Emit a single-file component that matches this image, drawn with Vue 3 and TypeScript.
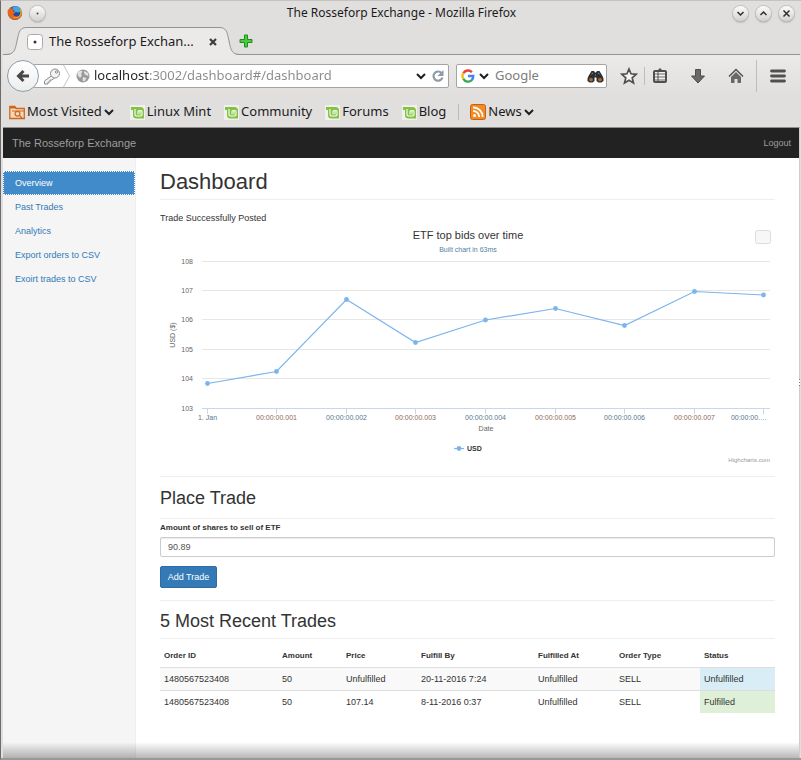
<script setup lang="ts">
import { ref } from 'vue'

interface Trade {
  id: string
  amount: number
  price: string
  fulfillBy: string
  fulfilledAt: string
  type: string
  status: string
}

const links: string[] = ['Overview', 'Past Trades', 'Analytics', 'Export orders to CSV', 'Exoirt trades to CSV']
const mintLinks: string[] = ['Linux Mint', 'Community', 'Forums', 'Blog']
const columns: string[] = ['Order ID', 'Amount', 'Price', 'Fulfill By', 'Fulfilled At', 'Order Type', 'Status']

const trades: Trade[] = [
  { id: '1480567523408', amount: 50, price: 'Unfulfilled', fulfillBy: '20-11-2016 7:24', fulfilledAt: 'Unfulfilled', type: 'SELL', status: 'Unfulfilled' },
  { id: '1480567523408', amount: 50, price: '107.14', fulfillBy: '8-11-2016 0:37', fulfilledAt: 'Unfulfilled', type: 'SELL', status: 'Fulfilled' },
]

const address = ref('localhost:3002/dashboard#/dashboard')
const query = ref('')
const shares = ref('90.89')

const gridValues: number[] = [108, 107, 106, 105, 104, 103]
const bids: number[] = [103.84, 104.24, 106.69, 105.22, 106.0, 106.38, 105.81, 106.96, 106.84]
const timeLabels: string[] = [
  '1. Jan', '00:00:00.001', '00:00:00.002', '00:00:00.003', '00:00:00.004',
  '00:00:00.005', '00:00:00.006', '00:00:00.007', '00:00:00.…',
]

const plotX = (i: number): number => Math.floor(47 + i * 69.6) + 0.5
const plotY = (v: number): number => Math.round((35 + (108 - v) * 29.4) * 2) / 2
const gridY = (v: number): number => Math.floor(35 + (108 - v) * 29.4) + 0.5
const labelX = (i: number): number => (i === 8 ? 589 : plotX(i))
const line: string = bids.map((v, i) => `${plotX(i)},${plotY(v)}`).join(' ')
</script>

<template>
  <div class="window">
    <header class="titlebar">
      <div class="title-left">
        <svg width="16" height="16" viewBox="0 0 16 16" aria-hidden="true">
          <circle cx="8" cy="8" r="7" fill="#1d4f9c" />
          <path d="M5 3C7 .8 11 .8 13 3c1.500 1.600 1 4-1 4.500L8 7z" fill="#4aa3dd" />
          <path d="M1 4c-.8 3-.5 6 1.200 8 2.600 3.200 8 3.600 10.800.8C15.500 10.500 15.700 7 14.500 4.500c.2 2-.2 3-.8 3.800C13 11 10.500 12 8.500 11.300 6.500 10.700 6 9.500 6.600 8.500l2-.8C7 7 6 6 6 4.500 4.500 4 4 3 3.800 2 2.500 2.600 2 4 2 5z" fill="#e8641b" />
          <path d="M14.500 4.500c.7 3-.3 6-2.500 7.500-2 1.500-5 1.500-6.500 0 3 1 5.700.3 7-1.500 1.200-1.700 1.300-4 .5-6z" fill="#f9c31f" />
        </svg>
        <button class="round" aria-label="Window menu">
          <svg width="15" height="15" viewBox="0 0 15 15"><circle cx="7.500" cy="7.500" r="1" fill="#444" /></svg>
        </button>
      </div>
      <div class="title-text">The Rosseforp Exchange - Mozilla Firefox</div>
      <div class="title-right">
        <button class="round" aria-label="Minimize">
          <svg width="15" height="15" viewBox="0 0 15 15"><path d="M4.500 6l3 3 3-3" class="glyph" /></svg>
        </button>
        <button class="round" aria-label="Maximize">
          <svg width="15" height="15" viewBox="0 0 15 15"><path d="M4.500 9l3-3 3 3" class="glyph" /></svg>
        </button>
        <button class="round" aria-label="Close">
          <svg width="15" height="15" viewBox="0 0 15 15"><path d="M4.500 4.500l6 6M10.500 4.500l-6 6" class="glyph" /></svg>
        </button>
      </div>
    </header>

    <div class="tabstrip">
      <svg class="tab-edge" width="22" height="28" viewBox="0 0 22 28" aria-hidden="true">
        <path d="M0 28C9 28 10 24 12 14S15 .5 22 .5V28z" fill="#ebeae9" />
        <path d="M0 27.500C9 27.500 10 24 12 14S15 .5 22 .5" fill="none" stroke="#949392" />
      </svg>
      <div class="tab">
        <svg width="16" height="16" viewBox="0 0 16 16" aria-hidden="true">
          <rect x=".5" y=".5" width="15" height="15" rx="3" fill="#fff" stroke="#aaa" />
          <circle cx="8" cy="8" r="1.500" fill="#333" />
        </svg>
        <span class="tab-title">The Rosseforp Exchan...</span>
        <button class="plain" aria-label="Close tab">
          <svg width="10" height="10" viewBox="0 0 10 10"><path d="M2 2l6 6M8 2l-6 6" stroke="#3c3c3c" stroke-width="2.200" /></svg>
        </button>
      </div>
      <svg class="tab-edge" width="22" height="28" viewBox="0 0 22 28" aria-hidden="true">
        <path d="M22 28C13 28 12 24 10 14S7 .5 0 .5V28z" fill="#ebeae9" />
        <path d="M22 27.500C13 27.500 12 24 10 14S7 .5 0 .5" fill="none" stroke="#949392" />
      </svg>
      <button class="plain new-tab" aria-label="New tab">
        <svg width="14" height="14" viewBox="0 0 14 14">
          <path d="M5.500 1h3v4.500H13v3H8.500V13h-3V8.500H1v-3h4.500z" fill="#4ccb3c" stroke="#1c8f1c" stroke-linejoin="round" />
        </svg>
      </button>
    </div>

    <nav class="toolbar" aria-label="Browser toolbar">
      <button class="back" aria-label="Back">
        <svg width="16" height="16" viewBox="0 0 16 16"><path d="M8.500 3L3.500 8l5 5M4 8H14" fill="none" stroke="#474747" stroke-width="3" /></svg>
      </button>
      <div class="field url">
        <svg width="32" height="22" viewBox="0 0 32 22" aria-hidden="true">
          <path d="M21.500 0l6 11-6 11" fill="none" stroke="#c4c4c4" />
          <g fill="#f4f4f4" stroke="#8b8b8b">
            <path d="M10 10.500L2.500 16v3H6v-2h2v-2h2l2.500-2z" />
            <circle cx="13" cy="8.500" r="4.500" /><circle cx="14.500" cy="7" r="1.200" />
          </g>
        </svg>
        <svg class="globe" width="14" height="14" viewBox="0 0 14 14" aria-hidden="true">
          <circle cx="7" cy="7" r="6.500" fill="#999" />
          <path d="M2 3l3-1.500 1.500 1L5 5l1 1.500L4 9 1.500 6zM8 2l4 2 .5 3-3-1L8 4zM7 8l3.500 1-2 3.500-2-1z" fill="#e3e3e3" />
        </svg>
        <input v-model="address" class="address" aria-label="Address" type="text" />
        <button class="plain" aria-label="Show history">
          <svg width="10" height="8" viewBox="0 0 10 8"><path d="M1 2l4 4 4-4" class="chev" /></svg>
        </button>
        <button class="plain reload" aria-label="Reload">
          <svg width="14" height="14" viewBox="0 0 14 14">
            <path d="M10.500 4A4.600 4.600 0 1 0 11.500 8.500" fill="none" stroke="#8e9aa5" stroke-width="2.200" />
            <path d="M12.500 1v6h-6z" fill="#8e9aa5" />
          </svg>
        </button>
      </div>
      <div class="field search">
        <svg width="14" height="14" viewBox="0 0 14 14" fill="none" stroke-width="2.400" aria-hidden="true">
          <path d="M2.300 4.300A5.300 5.300 0 0 1 10.900 3.200" stroke="#ea4335" />
          <path d="M2.300 9.700A5.300 5.300 0 0 1 2.300 4.300" stroke="#fbbc05" />
          <path d="M10.900 11A5.300 5.300 0 0 1 2.300 9.700" stroke="#34a853" />
          <path d="M7 7H12.300A5.300 5.300 0 0 1 10.600 11.100" stroke="#4285f4" />
        </svg>
        <svg width="10" height="8" viewBox="0 0 10 8" aria-hidden="true"><path d="M1 2l4 4 4-4" class="chev" /></svg>
        <input v-model="query" class="query" aria-label="Search" placeholder="Google" type="text" />
        <button class="plain" aria-label="Find">
          <svg width="17" height="13" viewBox="0 0 17 13">
            <path d="M4.500 1h2.500l1 1.500h1l1-1.500h2.500L15.500 6l1 2.500v2.500l-2 1.500h-3L9.500 11V7.500h-2V11l-2 1.500h-3L.5 11V8.500L1.500 6z" fill="#2b2f31" />
            <circle cx="4" cy="9.600" r="1.900" fill="#b0662a" /><circle cx="13" cy="9.600" r="1.900" fill="#b0662a" />
            <path d="M4.500 4l1.500-1M11 3l1.500 1M8 5h1" stroke="#8b9296" />
          </svg>
        </button>
      </div>
      <div class="tools">
        <button class="plain" aria-label="Bookmark this page">
          <svg width="18" height="18" viewBox="0 0 18 18"><path d="M9 2l2 4.800 5.200.5-4 3.500 1.300 5.200L9 13.200 4.500 16l1.300-5.200-4-3.500L7 6.800z" fill="#f5f5f5" stroke="#505050" stroke-width="1.700" /></svg>
        </button>
        <i class="bar short" />
        <button class="plain" aria-label="Bookmarks list">
          <svg width="16" height="18" viewBox="0 0 16 18">
            <rect x="2" y="4" width="12" height="11" rx="1" fill="#f2f2f2" stroke="#505050" stroke-width="2" />
            <path d="M5 4l3-3 3 3z" fill="#505050" />
            <path d="M3 7h10M3 10h10M3 13h10" stroke="#6a6a6a" />
            <path d="M6 5v10" stroke="#505050" />
          </svg>
        </button>
        <button class="plain wide" aria-label="Downloads">
          <svg width="16" height="16" viewBox="0 0 16 16"><path d="M5.500 1.500h5V8H14.500L8 15 1.500 8h4z" fill="#686868" stroke="#4e4e4e" /></svg>
        </button>
        <button class="plain wide" aria-label="Home">
          <svg width="16" height="16" viewBox="0 0 16 16">
            <path d="M3 9l5-5 5 5v6H9.500v-4h-3v4H3z" fill="#696969" />
            <path d="M1 8.500l7-7 7 7" fill="none" stroke="#505050" stroke-width="1.500" />
          </svg>
        </button>
        <i class="bar" />
        <button class="plain menu" aria-label="Menu">
          <svg width="16" height="14" viewBox="0 0 16 14"><path d="M1.500 2h13M1.500 7h13M1.500 12h13" stroke="#505050" stroke-width="2.800" stroke-linecap="round" /></svg>
        </button>
      </div>
    </nav>

    <nav class="bookmarks" aria-label="Bookmarks">
      <button class="plain mark visited">
        <svg width="16" height="16" viewBox="0 0 16 16" aria-hidden="true">
          <path d="M.8 14.500v-12h5l1.500 2h8v10z" fill="#f3d9bf" stroke="#d0661b" stroke-width="1.300" />
          <path d="M.8 2.500h5l1.500 2h-6z" fill="#d0661b" /><path d="M3 7h12" stroke="#d0661b" />
          <circle cx="8.500" cy="9.800" r="2.400" fill="none" stroke="#d0661b" stroke-width="1.200" /><path d="M10.500 11.500l2.500 2.500" stroke="#d0661b" stroke-width="1.300" />
        </svg>
        <span>Most Visited</span>
        <svg width="10" height="8" viewBox="0 0 10 8" aria-hidden="true"><path d="M1 2l4 4 4-4" class="chev" /></svg>
      </button>
      <a v-for="name in mintLinks" :key="name" class="mark" href="#">
        <svg width="15" height="15" viewBox="0 0 15 15" aria-hidden="true">
          <rect width="15" height="15" fill="#f0f0ee" />
          <path d="M1 2h9.500a3.500 3.500 0 0 1 3.500 3.500V13.500H6.500A3.500 3.500 0 0 1 3 10V5H1z" fill="#84c244" />
          <path d="M5 4v5.500q0 1.500 1.500 1.500h4q1.500 0 1.500-1.500V6.500q0-1-1-1t-1 1v3M10 6.500q0-1-1-1t-1 1v3" fill="none" stroke="#fff" stroke-width="1.100" />
        </svg>
        <span>{{ name }}</span>
      </a>
      <i class="bar mini" />
      <button class="plain mark">
        <svg width="16" height="16" viewBox="0 0 16 16" aria-hidden="true">
          <rect x=".5" y=".5" width="15" height="15" rx="2" fill="#f28b25" stroke="#c9600d" />
          <circle cx="4.500" cy="11.500" r="1.500" fill="#fff" />
          <path d="M3 6.800a6.200 6.200 0 0 1 6.200 6.200M3 3.300A9.700 9.700 0 0 1 12.700 13" fill="none" stroke="#fff" stroke-width="1.800" />
        </svg>
        <span>News</span>
        <svg width="10" height="8" viewBox="0 0 10 8" aria-hidden="true"><path d="M1 2l4 4 4-4" class="chev" /></svg>
      </button>
    </nav>

    <div class="page">
      <div class="navbar">
        <a class="brand" href="#">The Rosseforp Exchange</a>
        <a class="logout" href="#">Logout</a>
      </div>
      <div class="body">
        <aside class="sidebar">
          <a v-for="(item, i) in links" :key="item" href="#" :class="{ active: i === 0 }">{{ item }}</a>
        </aside>
        <main class="main">
          <h1>Dashboard</h1>
          <p class="notice">Trade Successfully Posted</p>

          <svg class="chart" viewBox="0 0 615 242" role="img" aria-label="ETF top bids over time">
            <text x="308" y="13" class="chart-title">ETF top bids over time</text>
            <text x="308" y="26" class="chart-sub">Built chart in 63ms</text>
            <rect x="595.500" y="4.500" width="15" height="13" rx="2" fill="#f7f7f7" stroke="#dcdcdc" />
            <g v-for="v in gridValues" :key="v">
              <path :d="`M42 ${gridY(v)}H610`" :stroke="v === 103 ? '#ccd6eb' : '#e6e6e6'" />
              <text x="33" :y="gridY(v) + 2" class="tick end">{{ v }}</text>
            </g>
            <text transform="translate(15 109) rotate(-90)" class="tick dark">USD ($)</text>
            <g v-for="(t, i) in timeLabels" :key="t">
              <path :d="`M${plotX(i)} 182V188`" stroke="#ccd6eb" />
              <text :x="labelX(i)" y="194" class="tick" :class="i % 2 ? 'warm' : 'cool'">{{ t }}</text>
            </g>
            <text x="326" y="205" class="tick dark">Date</text>
            <polyline :points="line" fill="none" stroke="#7cb5ec" stroke-width="1.200" />
            <circle v-for="(b, i) in bids" :key="i" :cx="plotX(i)" :cy="plotY(b)" r="2.400" fill="#7cb5ec" />
            <path d="M294 222.500H304" stroke="#7cb5ec" stroke-width="1.200" />
            <circle cx="299" cy="222.500" r="2.400" fill="#7cb5ec" />
            <text x="307" y="225" class="legend">USD</text>
            <text x="610" y="236" class="credit">Highcharts.com</text>
          </svg>

          <section class="block">
            <h2>Place Trade</h2>
            <form @submit.prevent>
              <label for="shares">Amount of shares to sell of ETF</label>
              <input id="shares" v-model="shares" class="control" type="text" />
              <button class="submit" type="submit">Add Trade</button>
            </form>
          </section>

          <section class="block recent">
            <h2>5 Most Recent Trades</h2>
            <table>
              <colgroup>
                <col class="w-id" /><col class="w-amount" /><col class="w-price" /><col class="w-by" />
                <col class="w-at" /><col class="w-type" /><col class="w-status" />
              </colgroup>
              <thead>
                <tr><th v-for="c in columns" :key="c" scope="col">{{ c }}</th></tr>
              </thead>
              <tbody>
                <tr v-for="(t, i) in trades" :key="i">
                  <td>{{ t.id }}</td>
                  <td>{{ t.amount }}</td>
                  <td>{{ t.price }}</td>
                  <td>{{ t.fulfillBy }}</td>
                  <td>{{ t.fulfilledAt }}</td>
                  <td>{{ t.type }}</td>
                  <td :class="t.status === 'Fulfilled' ? 'success' : 'info'">{{ t.status }}</td>
                </tr>
              </tbody>
            </table>
          </section>
        </main>
      </div>
      <i class="grip" />
    </div>
  </div>
</template>

<style>
body {
  margin: 0;
  background: #fff;
}
</style>

<style scoped>
* {
  box-sizing: border-box;
}
.window {
  display: flex;
  flex-direction: column;
  min-height: 100vh;
  padding: 2px 1px 0 2px;
  background: #e0dfde;
  border-top: 1px solid #c4c3bf;
  border-left: 1px solid #6e6c6b;
  border-bottom: 2px solid #999897;
  font: 13px/16px "Noto Sans", sans-serif;
  color: #1b1b1b;
}
a {
  color: inherit;
  text-decoration: none;
}
button {
  font: inherit;
  color: inherit;
}
.plain {
  display: flex;
  align-items: center;
  justify-content: center;
  padding: 0;
  border: 0;
  background: none;
}
.glyph {
  fill: none;
  stroke: #2e2e2e;
  stroke-width: 1.5;
}
.chev {
  fill: none;
  stroke: #1f1f1f;
  stroke-width: 2;
}

.titlebar {
  display: grid;
  grid-template-columns: 1fr auto 1fr;
  align-items: center;
  height: 24px;
  padding: 0 6px 4px;
}
.title-left,
.title-right {
  display: flex;
  align-items: center;
  gap: 8px;
}
.title-left {
  gap: 7px;
  margin-left: -2px;
}
.title-right {
  justify-content: flex-end;
}
.title-text {
  font-size: 12px;
}
.round {
  display: flex;
  width: 15px;
  height: 15px;
  padding: 0;
  border: 0;
  border-radius: 50%;
  background: linear-gradient(#fbfbfb, #d3d2d1);
  box-shadow: 0 0 0 1px #c4c3c2, 0 1px 2px #777;
}

.tabstrip {
  display: flex;
  height: 28px;
  padding-left: 2px;
  box-shadow: inset 0 -1px #949392;
}
.tab-edge {
  flex: none;
}
.tab {
  display: flex;
  align-items: center;
  gap: 6px;
  width: 192px;
  padding-right: 1px;
  background: #ebeae9;
  border-top: 1px solid #949392;
}
.tab svg {
  flex: none;
}
.tab-title {
  flex: 1;
  padding-bottom: 2px;
  white-space: nowrap;
}
.new-tab {
  margin-left: -2px;
}

.toolbar {
  display: flex;
  align-items: center;
  height: 42px;
  padding: 0 14px 0 4px;
  background: linear-gradient(#ebeae9, #e0dfde);
}
.back {
  z-index: 1;
  display: flex;
  align-items: center;
  justify-content: center;
  flex: none;
  width: 32px;
  height: 32px;
  padding: 0;
  border: 1px solid #919caa;
  border-radius: 50%;
  background: linear-gradient(#fff, #eceded);
}
.field {
  display: flex;
  align-items: center;
  height: 24px;
  border: 1px solid #a5a4a3;
  border-radius: 2px;
  background: #fff;
}
.url {
  flex: 1 1 416px;
  min-width: 0;
  margin-left: -6px;
  padding: 0 3px 0 8px;
}
.globe {
  margin-left: 2px;
}
.address {
  flex: 1;
  min-width: 0;
  padding: 0 0 2px 4px;
  border: 0;
  outline: 0;
  font: inherit;
  color: transparent;
  background: linear-gradient(90deg, #222 60px, #8a8a8a 60px);
  background-clip: text;
  -webkit-background-clip: text;
}
.reload {
  margin-left: 5px;
}
.search {
  flex: 0 1 151px;
  gap: 4px;
  margin-left: 7px;
  padding: 0 2px 0 4px;
}
.query {
  flex: 1;
  width: 0;
  min-width: 0;
  padding: 0 0 2px 2px;
  border: 0;
  outline: 0;
  background: none;
  font: inherit;
}
.query::placeholder {
  color: #7d7d7d;
  opacity: 1;
}
.tools {
  display: flex;
  align-items: center;
  gap: 7px;
  margin-left: 13px;
}
.wide {
  width: 16px;
  margin-left: 15px;
}
.menu {
  margin-left: 6px;
}
.bar {
  width: 1px;
  height: 32px;
  margin-left: 5px;
  background: #b5bfca;
}
.short {
  height: 18px;
  margin-left: -1px;
}

.bookmarks {
  display: flex;
  align-items: center;
  gap: 13px;
  height: 30px;
  padding: 0 6px;
}
.mark {
  display: flex;
  align-items: center;
  gap: 2px;
  white-space: nowrap;
}
.mark span {
  padding-bottom: 2px;
}
.visited {
  margin-right: 3px;
}
.mini {
  height: 16px;
  margin: 0 -2px 0 -1px;
  background: #bdbcbb;
}

.page {
  position: relative;
  display: flex;
  flex: 1;
  flex-direction: column;
  border-top: 1px solid #8f8e8d;
  border-right: 1px solid #cfcecd;
  background: #fff;
  font: 9px/12px "Liberation Sans", sans-serif;
  color: #333;
}
.page::after {
  content: "";
  position: absolute;
  inset: auto 0 0 0;
  height: 16px;
  background: linear-gradient(rgba(0, 0, 0, 0), rgba(0, 0, 0, 0.28));
  pointer-events: none;
}
.grip {
  position: absolute;
  right: -1px;
  top: 251px;
  width: 1px;
  height: 7px;
  background: repeating-linear-gradient(#777 0 1px, #fff 1px 3px);
}
.navbar {
  display: flex;
  align-items: center;
  justify-content: space-between;
  height: 30px;
  padding: 0 8px 0 9px;
  background: #222;
  color: #9d9d9d;
}
.brand {
  font-size: 11px;
}
.body {
  display: flex;
  flex: 1;
}
.sidebar {
  flex: 0 0 133px;
  padding-top: 13px;
  background: #f5f5f5;
  border-right: 1px solid #eee;
  color: #337ab7;
}
.sidebar a {
  display: block;
  padding: 6px 12px;
}
.sidebar .active {
  color: #fff;
  background: #428bca;
  outline: 1px dotted #fff;
  outline-offset: -1px;
}
.main {
  flex: 1;
  min-width: 0;
  padding: 11px 24px 24px;
}
h1,
h2 {
  margin: 0;
  border-bottom: 1px solid #eee;
  font-weight: 400;
}
h1 {
  padding-bottom: 4px;
  font-size: 22px;
  line-height: 26px;
}
h2 {
  padding: 11px 0 9px;
  font-size: 18px;
  line-height: 21px;
}
.recent h2 {
  padding: 10px 0 6px;
}
.notice {
  margin: 12px 0 2px;
}
.chart {
  display: block;
  width: 100%;
  height: auto;
  margin-bottom: 8px;
}
.chart text {
  text-anchor: middle;
}
.chart .chart-title {
  font-size: 11px;
  fill: #333;
}
.chart .chart-sub {
  font-size: 7px;
  fill: #5580a4;
}
.chart .tick {
  font-size: 7px;
  fill: #666;
}
.chart .warm {
  fill: #8d6a58;
}
.chart .cool {
  fill: #58788c;
}
.chart .end {
  text-anchor: end;
}
.chart .legend {
  font-size: 7px;
  font-weight: 700;
  fill: #333;
  text-anchor: start;
}
.chart .credit {
  font-size: 6px;
  fill: #999;
  text-anchor: end;
}
.block {
  border-top: 1px solid #eee;
}
form {
  display: flex;
  flex-direction: column;
  align-items: flex-start;
  padding: 3px 0 12px;
}
label {
  margin-bottom: 3px;
  font-size: 8px;
  font-weight: 700;
}
.control {
  width: 100%;
  height: 20px;
  padding: 0 7px;
  border: 1px solid #ccc;
  border-radius: 2px;
  box-shadow: inset 0 1px 1px rgba(0, 0, 0, 0.08);
  background: #fff;
  font: inherit;
  color: #555;
}
.submit {
  min-width: 57px;
  height: 22px;
  margin-top: 9px;
  padding: 0 6px;
  border: 1px solid #2e6da4;
  border-radius: 2px;
  background: #337ab7;
  color: #fff;
}
table {
  width: 100%;
  margin-top: 5px;
  border-collapse: collapse;
  table-layout: fixed;
}
th,
td {
  height: 23px;
  padding: 0 4px;
  text-align: left;
  white-space: nowrap;
}
th {
  padding-top: 2px;
  font-size: 8px;
}
tbody tr {
  border-top: 1px solid #ddd;
}
tbody tr:first-child {
  background: #f9f9f9;
}
.info {
  background: #d9edf7;
}
.success {
  background: #dff0d8;
}
.w-id {
  width: 118px;
}
.w-amount {
  width: 64px;
}
.w-price {
  width: 75px;
}
.w-by {
  width: 117px;
}
.w-at {
  width: 81px;
}
.w-type {
  width: 85px;
}
.w-status {
  width: 75px;
}
</style>
